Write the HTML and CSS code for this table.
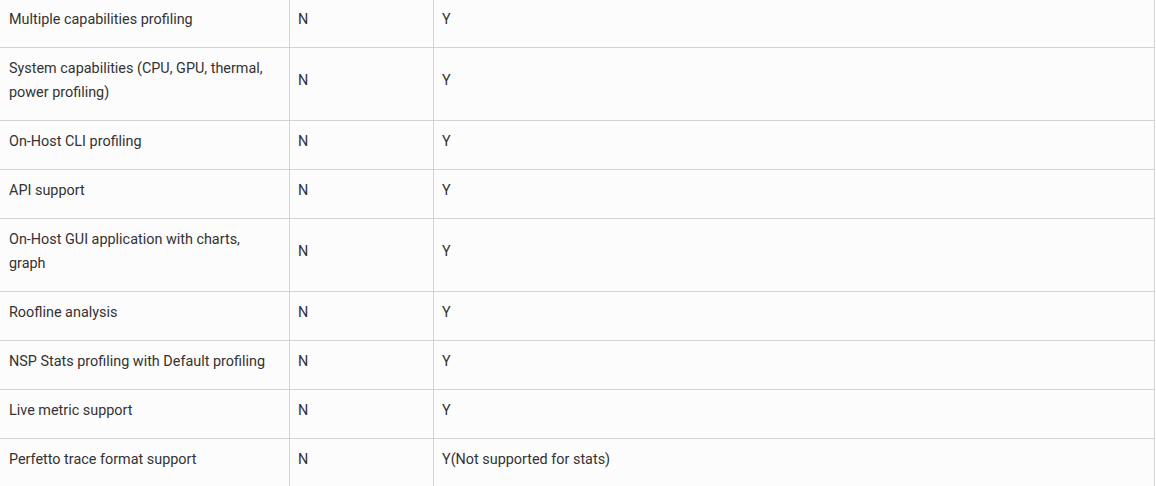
FILE: index.html
```html
<!DOCTYPE html>
<html>
<head>
<meta charset="utf-8">
<link rel="stylesheet" href="styles.css">
</head>
<body>
<table class="features">
  <colgroup>
    <col class="c1"><col class="c2"><col class="c3">
  </colgroup>
  <tbody>
    <tr><td>Multiple capabilities profiling</td><td>N</td><td>Y</td></tr>
    <tr><td>System capabilities (CPU, GPU, thermal, power profiling)</td><td>N</td><td>Y</td></tr>
    <tr><td>On-Host CLI profiling</td><td>N</td><td>Y</td></tr>
    <tr><td>API support</td><td>N</td><td>Y</td></tr>
    <tr><td>On-Host GUI application with charts, graph</td><td>N</td><td>Y</td></tr>
    <tr><td>Roofline analysis</td><td>N</td><td>Y</td></tr>
    <tr><td>NSP Stats profiling with Default profiling</td><td>N</td><td>Y</td></tr>
    <tr><td>Live metric support</td><td>N</td><td>Y</td></tr>
    <tr><td>Perfetto trace format support</td><td>N</td><td>Y(Not supported for stats)</td></tr>
  </tbody>
</table>
</body>
</html>
```
FILE: styles.css
```css
html, body {
  margin: 0;
  padding: 0;
  background: #ffffff;
}
.features {
  border-collapse: collapse;
  table-layout: fixed;
  width: 1156px;
  margin-left: -1px;
  margin-top: -2px;
  background: #fcfcfc;
  font-family: Roboto, "Liberation Sans", sans-serif;
  font-size: 14.4px;
  line-height: 24px;
  color: #333333;
}
.c1 { width: 290px; }
.c2 { width: 144px; }
.features td {
  border: 1px solid #d4d4d4;
  padding: 9px 12px 15px 8px;
  vertical-align: middle;
  text-align: left;
}
.features td:first-child {
  padding-left: 9px;
}
```
